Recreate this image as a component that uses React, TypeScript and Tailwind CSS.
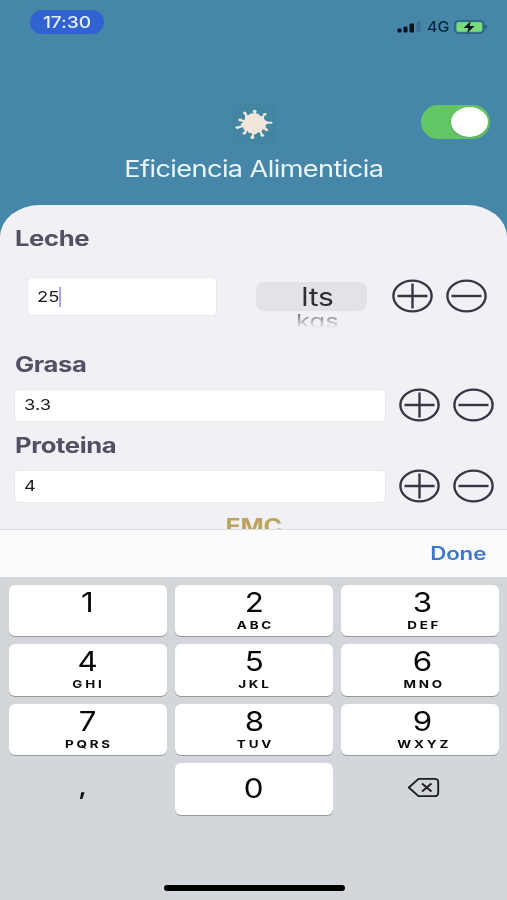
import type { ReactNode } from "react"

const keys = [
  { digit: "1", letters: "" },
  { digit: "2", letters: "ABC" },
  { digit: "3", letters: "DEF" },
  { digit: "4", letters: "GHI" },
  { digit: "5", letters: "JKL" },
  { digit: "6", letters: "MNO" },
  { digit: "7", letters: "PQRS" },
  { digit: "8", letters: "TUV" },
  { digit: "9", letters: "WXYZ" },
]

function Stepper() {
  return (
    <div className="flex gap-[13px]">
      <button type="button" aria-label="Sumar">
        <svg width="41" height="34" viewBox="0 0 41 34" fill="none" stroke="#383645" strokeWidth="2.4">
          <ellipse cx="20.5" cy="17" rx="19.1" ry="15.4" />
          <path d="M5.5 17h30M20.5 4.5v25" />
        </svg>
      </button>
      <button type="button" aria-label="Restar">
        <svg width="41" height="34" viewBox="0 0 41 34" fill="none" stroke="#383645" strokeWidth="2.4">
          <ellipse cx="20.5" cy="17" rx="19.1" ry="15.4" />
          <path d="M5.5 17h30" />
        </svg>
      </button>
    </div>
  )
}

function Label({ children }: { children: ReactNode }) {
  return (
    <div className="h-6 pl-[15px] text-[21px] leading-6 font-bold tracking-[-0.3px] text-[#535064]">
      <span className="inline-block origin-left scale-x-[1.22]">{children}</span>
    </div>
  )
}

function Field({ value }: { value: string }) {
  return (
    <div className="flex h-[34px] items-center justify-between pr-[13px] pl-[14px]">
      <div className="flex h-[33px] w-[372px] items-center rounded-[5px] border border-[#e9e8ee] bg-white pt-px pl-[9px] text-[15px] text-[#1b1b1e]">
        <span className="inline-block origin-left scale-x-[1.22]">{value}</span>
      </div>
      <Stepper />
    </div>
  )
}

function StatusBar() {
  return (
    <div className="flex h-[46px] items-start justify-between pr-[19px] pl-[30px]">
      <div className="mt-[10px] flex h-6 w-[74px] items-center justify-center rounded-full bg-[#3262d2] text-[16px] font-medium text-[#e3f0ff]">
        <span className="inline-block scale-x-[1.2] tracking-[-0.1px]">17:30</span>
      </div>
      <div className="mt-[18px] flex h-[18px] items-center">
        <svg width="24" height="12" viewBox="0 0 24 12" fill="#07131c">
          <rect x="0.5" y="7.5" width="4" height="4" rx="1.2" />
          <rect x="6.5" y="5.5" width="4" height="6" rx="1.2" />
          <rect x="12.5" y="2.5" width="4.5" height="9" rx="1.2" />
          <rect x="19.5" y="0.5" width="4" height="11" rx="1.2" fill="#3b7193" />
        </svg>
        <span className="ml-[6px] w-[22px] text-[14px] leading-none font-medium text-[#0e2536]">
          <span className="inline-block origin-left scale-x-[1.14]">4G</span>
        </span>
        <svg className="ml-[5px]" width="34" height="14" viewBox="0 0 34 14">
          <rect x="0.8" y="0.8" width="29" height="12.4" rx="3.6" fill="#4686a9" stroke="#245d70" strokeWidth="1.3" />
          <rect x="2.6" y="2.3" width="25.4" height="9.4" rx="2" fill="#7bdc7d" />
          <path d="M31.2 4.6c2.2.6 2.2 4.2 0 4.8z" fill="#245d70" />
          <path d="M16.7 1.2 9.6 8h4.8l-1.2 5 7.5-6.9h-5z" fill="#07131c" />
        </svg>
      </div>
    </div>
  )
}

function Splash() {
  return (
    <svg width="38" height="31" viewBox="0 0 38 31" fill="#f0e6dc" stroke="#f0e6dc" strokeLinecap="round">
      <path
        strokeWidth="1.800"
        strokeLinejoin="round"
        d="M11 7c2 .4 4-.2 5.500-2 2 .8 4.200.8 6.200.4 1 2 2.500 3 5.300 2.600-.2 2 .4 4 4 5.200-2 1.500-3 3-2 6-2.600-.2-3.800.8-4.400 3-2.200-.2-3.600.4-5.600 2.400-1.800-1.500-3.500-2-5.600-1.400-.6-2-2.200-3.400-5-3 .4-2.400-.4-3.600-2.800-4.800 2.600-1.200 4-2.400 4.400-8.400z"
      />
      <path strokeWidth="2.100" d="m12.500 9-2.200-4.500M19.700 7V3M27 9l2.500-3.500M30 13.700h6.500M27.500 18l3.800 2.600M24.500 21l2.500 5M18.500 22.500l-1 5.500M12.500 20l-3 4M10 16.500l-7 2M11 13l-5.500-2" />
      <g stroke="none">
        <ellipse cx="9.800" cy="4" rx="1.700" ry="1.500" />
        <ellipse cx="19.700" cy="2.500" rx="1.900" ry="1.800" />
        <ellipse cx="29.800" cy="5.200" rx="1.700" ry="1.300" />
        <ellipse cx="31.500" cy="20.800" rx="1.700" ry="1.400" />
        <ellipse cx="27.300" cy="26.300" rx="1.800" ry="1.500" />
        <ellipse cx="17.400" cy="28.400" rx="2" ry="1.700" />
        <ellipse cx="9.300" cy="24.300" rx="1.700" ry="1.400" />
        <ellipse cx="2.400" cy="18.600" rx="2" ry="1.400" />
        <ellipse cx="5.200" cy="11" rx="1.800" ry="1.400" />
      </g>
    </svg>
  )
}

function Header() {
  return (
    <header className="h-[205px]">
      <StatusBar />
      <div className="grid h-[105px] grid-cols-3 pt-[57px]">
        <div />
        <div className="flex justify-center">
          <div className="flex h-[43px] w-[45px] items-center justify-center bg-[#4286a4]">
            <Splash />
          </div>
        </div>
        <div className="flex justify-end pt-[2px] pr-[17px]">
          <button
            type="button"
            role="switch"
            aria-checked="true"
            className="flex h-[34px] w-[69px] items-center justify-end rounded-full bg-[#62c665] pr-[2px]"
          >
            <span className="h-[30px] w-[37px] rounded-[50%] bg-white shadow-sm" />
          </button>
        </div>
      </div>
      <h1 className="h-9 text-center text-[23px] leading-9 tracking-[-0.5px] text-[#e9f6fd]">
        <span className="inline-block scale-x-[1.18]">Eficiencia Alimenticia</span>
      </h1>
    </header>
  )
}

function Form() {
  return (
    <main className="h-[324px] overflow-hidden rounded-t-[40px_32px] bg-[#f0f0f5] pt-[22px]">
      <Label>Leche</Label>
      <div className="mt-[26px] flex h-[54px] items-start pl-[27px]">
        <div className="flex h-[39px] w-[190px] items-center rounded-[5px] border border-[#e9e8ee] bg-white pt-px pl-[9px] text-[15px] text-[#1b1b1e]">
          <span className="inline-block origin-left scale-x-[1.22]">25</span>
          <span className="ml-[4px] h-5 w-[2px] bg-[#a6a5df]" />
        </div>
        <div className="ml-[39px] h-[54px] w-[111px] pt-[5px] text-center">
          <div className="h-[29px] rounded-[8px] bg-[#e3e3e7] pl-[11px] text-[25px] leading-[30px] text-[#2e2e35]">
            <span className="inline-block scale-x-[1.2] tracking-[-0.2px]">lts</span>
          </div>
          <div className="mt-[3px] h-[14px] overflow-hidden mask-b-from-0% mask-b-to-100% pl-3 text-[22px] leading-[19px] text-[#77777e]">
            <span className="inline-block origin-top scale-x-[1.16] scale-y-[0.85]">kgs</span>
          </div>
        </div>
        <div className="ml-[25px] pt-[2px]">
          <Stepper />
        </div>
      </div>
      <div className="mt-[22px]">
        <Label>Grasa</Label>
      </div>
      <div className="mt-[11px]">
        <Field value="3.3" />
      </div>
      <div className="mt-3">
        <Label>Proteina</Label>
      </div>
      <div className="mt-[11px]">
        <Field value="4" />
      </div>
      <div className="mt-[11px] text-center text-[21px] leading-[26px] font-bold tracking-[-0.2px] text-[#bba35e]">
        <span className="inline-block scale-x-[1.19]">EMC</span>
      </div>
    </main>
  )
}

function Keyboard() {
  return (
    <section className="flex h-[323px] flex-col bg-[#d3d6db] pt-2 pr-[7.500px] pl-[8.500px]">
      <div className="grid grid-cols-3 gap-x-2 gap-y-[8px] text-[#09090a]">
        {keys.map((key) => (
          <button
            type="button"
            key={key.digit}
            className="flex h-[51.400px] flex-col items-center rounded-[6px] bg-white pt-[3px] shadow-[0_1px_0_#96989d] nth-[3n]:pl-[5px]"
          >
            <span className="inline-block h-[30px] scale-x-[1.16] text-[27px] leading-[30px]">{key.digit}</span>
            <span className="inline-block h-[14px] scale-x-[1.22] pl-[2px] text-[11px] leading-[14px] font-bold tracking-[2.3px]">
              {key.letters}
            </span>
          </button>
        ))}
        <button type="button" className="flex h-[51.400px] items-center justify-center pr-[11px] pb-[4px] text-[24px] font-medium">
          <span className="inline-block scale-x-[1.2]">,</span>
        </button>
        <button
          type="button"
          className="flex h-[51.400px] items-center justify-center rounded-[6px] bg-white text-[27px] shadow-[0_1px_0_#96989d]"
        >
          <span className="inline-block scale-x-[1.16]">0</span>
        </button>
        <button type="button" aria-label="Borrar" className="flex h-[51.400px] items-center justify-center pb-[2px] pl-[7px]">
          <svg width="33" height="21" viewBox="0 0 33 21" fill="none" stroke="#1e1e22" strokeWidth="1.900">
            <path d="M11.500 1.900h16c2.400 0 3.700 1.100 3.700 3.200v10.800c0 2.100-1.300 3.200-3.700 3.200h-16L1.800 10.500z" strokeLinejoin="round" />
            <path d="m15 6.500 9.500 8M24.500 6.500l-9.500 8" />
          </svg>
        </button>
      </div>
      <div className="mx-auto mt-auto mb-[9px] h-[6px] w-[181px] rounded-full bg-black" />
    </section>
  )
}

export default function App() {
  return (
    <div className="h-[900px] w-[507px] overflow-hidden bg-[#4686a9] font-['Inter','Liberation_Sans',sans-serif]">
      <Header />
      <Form />
      <div className="flex h-[48px] items-center justify-end border-t border-[#dcdce0] bg-[#fbfbfe] pr-[21px] text-[18px] font-semibold text-[#3e78cb]">
        <button type="button" className="origin-right scale-x-[1.24] tracking-[-0.1px]">
          Done
        </button>
      </div>
      <Keyboard />
    </div>
  )
}
